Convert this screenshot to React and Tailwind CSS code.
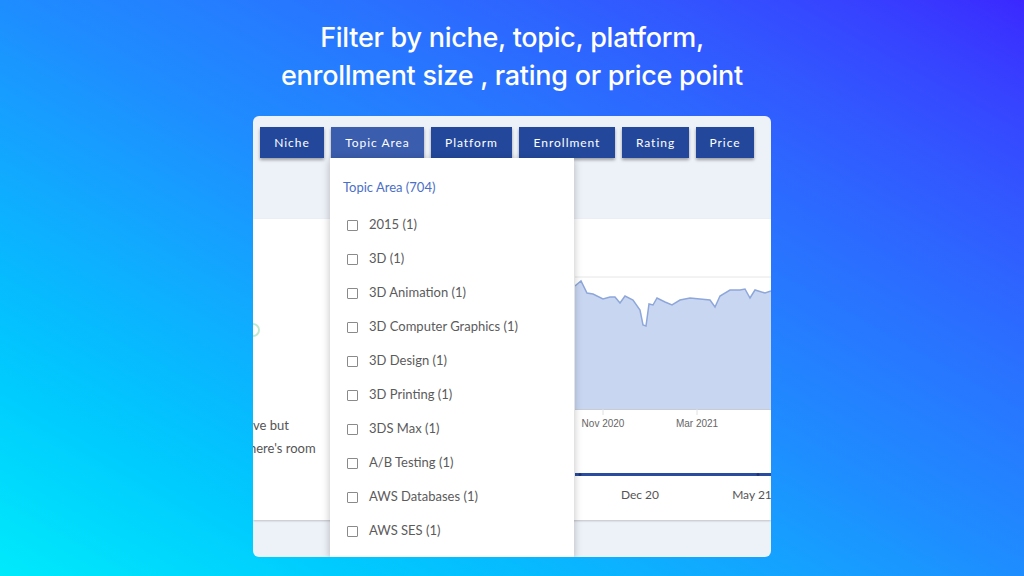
import React from 'react';

const filters = [
  { label: 'Niche', w: 'w-[64px]' },
  { label: 'Topic Area', w: 'w-[93px]', active: true },
  { label: 'Platform', w: 'w-[81px]' },
  { label: 'Enrollment', w: 'w-[96px]' },
  { label: 'Rating', w: 'w-[67px]' },
  { label: 'Price', w: 'w-[58px]' },
];

const topics = [
  '2015 (1)',
  '3D (1)',
  '3D Animation (1)',
  '3D Computer Graphics (1)',
  '3D Design (1)',
  '3D Printing (1)',
  '3DS Max (1)',
  'A/B Testing (1)',
  'AWS Databases (1)',
  'AWS SES (1)',
];

// chart points, relative to the white panel (x from 575, y from 219)
const pts = [
  [0, 67], [6, 62], [12, 74], [18, 75], [28, 80], [35, 78], [40, 78], [45, 84],
  [50, 77], [58, 81], [65, 91], [68, 106], [71, 107], [74, 85], [78, 86], [82, 79],
  [90, 83], [97, 86], [105, 81], [115, 79], [125, 80], [135, 81], [140, 88],
  [145, 77], [155, 71], [165, 71], [170, 70], [175, 79], [180, 71], [190, 74], [196, 72],
];

const linePath = pts.map((p, i) => (i === 0 ? 'M' : 'L') + p[0] + ' ' + p[1]).join(' ');
const areaPath = linePath + ' L196 190 L0 190 Z';

const Chart = () => (
  <svg width="196" height="301" viewBox="0 0 196 301" className="block">
    <line x1="0" y1="58" x2="196" y2="58" stroke="#e6e6e6" strokeWidth="1" />
    <line x1="0" y1="124" x2="196" y2="124" stroke="#e6e6e6" strokeWidth="1" />
    <path d={areaPath} fill="#c9d6f1" />
    <path d={linePath} fill="none" stroke="#8ea7da" strokeWidth="1.5" />
    <line x1="0" y1="190.5" x2="196" y2="190.5" stroke="#c8ccd6" strokeWidth="1" />
    <line x1="28" y1="190" x2="28" y2="196" stroke="#e0e0e0" />
    <line x1="122" y1="190" x2="122" y2="196" stroke="#e0e0e0" />
    <text x="28" y="208" textAnchor="middle" fontSize="10" fill="#666" fontFamily="'Liberation Sans', Arial, sans-serif">Nov 2020</text>
    <text x="122" y="208" textAnchor="middle" fontSize="10" fill="#666" fontFamily="'Liberation Sans', Arial, sans-serif">Mar 2021</text>
    <rect x="0" y="254" width="196" height="3" fill="#2a4c9e" />
    <circle cx="5" cy="255.5" r="1.5" fill="#1b3478" />
    <circle cx="183" cy="255.5" r="1.5" fill="#1b3478" />
    <text x="65" y="280" textAnchor="middle" fontSize="12" fill="#555" fontFamily="Lato, 'Noto Sans', sans-serif">Dec 20</text>
    <text x="177" y="280" textAnchor="middle" fontSize="12" fill="#555" fontFamily="Lato, 'Noto Sans', sans-serif">May 21</text>
  </svg>
);

const App = () => {
  return (
    <div className="w-[1024px] h-[576px] overflow-hidden bg-linear-to-tr from-[#00eafb] via-[#1e8dff] to-[#3b27ff] flex flex-col items-center">
      <h1 className="mt-[19px] text-white text-center text-[27px] leading-[38px] font-medium font-['Inter','Noto_Sans',sans-serif] tracking-[-0.01em]">
        Filter by niche, topic, platform,
        <br />
        enrollment size , rating or price point
      </h1>

      <div className="relative mt-[21px] w-[518px] h-[441px] rounded-[6px] bg-[#edf1f8] overflow-hidden font-['Lato','Noto_Sans',sans-serif]">
        {/* filter buttons */}
        <div className="flex gap-[7px] pl-[7px] pt-[11px] h-[42px]">
          {filters.map((f) => (
            <div
              key={f.label}
              className={
                'h-[31px] flex items-center justify-center text-white text-[12px] tracking-[0.08em] shadow-[0_2px_3px_rgba(0,0,0,0.35)] ' +
                f.w +
                ' ' +
                (f.active ? 'bg-[#3a5dad]' : 'bg-[#23489b]')
              }
            >
              {f.label}
            </div>
          ))}
        </div>

        <div className="h-[61px]" />

        {/* white content panel */}
        <div className="h-[301px] bg-white flex shadow-[0_1px_2px_rgba(0,0,0,0.2)]">
          <div className="w-[322px] relative overflow-hidden">
            <div className="absolute left-[-7px] top-[104px] w-[14px] h-[14px] rounded-full border-2 border-[#7fd3a0] opacity-50" />
            <div className="mt-[195px] text-[13px] leading-[23px] text-[#555]">
              <div>ve but</div>
              <div className="-ml-[4px]">here's room</div>
            </div>
          </div>
          <Chart />
        </div>

        {/* dropdown menu */}
        <div className="absolute left-[77px] top-[42px] w-[244px] bottom-0 bg-white shadow-[0_2px_8px_rgba(0,0,0,0.25)]">
          <div className="pl-[13px] pt-[20px] h-[50px] text-[13px] text-[#4b6fc6]">Topic Area (704)</div>
          <ul className="pl-[17px]">
            {topics.map((t) => (
              <li key={t} className="h-[34px] flex items-center gap-[11px] text-[13px] text-[#5b5b5b]">
                <span className="w-[11px] h-[11px] border border-[#8a8a8a] rounded-[1px] shrink-0" />
                <span>{t}</span>
              </li>
            ))}
          </ul>
        </div>
      </div>
    </div>
  );
};

export default App;
